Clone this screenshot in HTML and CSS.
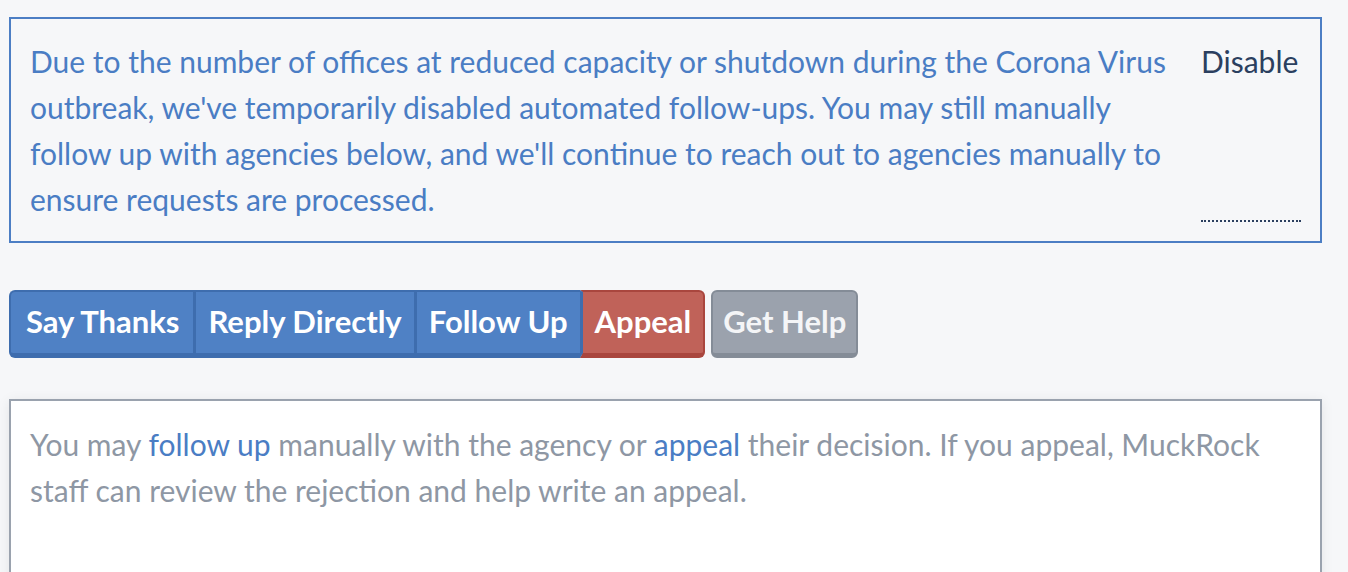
FILE: index.html
```html
<!DOCTYPE html>
<html lang="en">
<head>
    <meta charset="UTF-8">
    <meta name="viewport" content="width=device-width, initial-scale=1.0">
    <title>Request actions</title>
    <link rel="stylesheet" href="styles.css">
</head>
<body>
    <div class="notice">
        <p class="notice-text">Due to the number of offices at reduced capacity or shutdown during the Corona Virus outbreak, we've temporarily disabled automated follow-ups. You may still manually follow up with agencies below, and we'll continue to reach out to agencies manually to ensure requests are processed.</p>
        <button class="notice-toggle" type="button">Disable</button>
    </div>

    <div class="actions">
        <div class="btn-group">
            <button class="btn btn-blue" type="button">Say Thanks</button>
            <button class="btn btn-blue" type="button">Reply Directly</button>
            <button class="btn btn-blue" type="button">Follow Up</button>
            <button class="btn btn-red" type="button">Appeal</button>
        </div>
        <button class="btn btn-gray" type="button">Get Help</button>
    </div>

    <div class="panel">
        <p>You may <a href="#">follow up</a> manually with the agency or <a href="#">appeal</a> their decision. If you appeal, MuckRock staff can review the rejection and help write an appeal.</p>
    </div>
</body>
</html>
```

FILE: styles.css
```css
body {
    margin: 0;
    padding: 17px 26px 0 9px;
    background: #f6f7f9;
    font-family: 'Lato', 'Open Sans', sans-serif;
    overflow: hidden;
}
.notice {
    display: flex;
    gap: 20px;
    border: 2px solid #4c7ec4;
    padding: 19px 19px;
}
.notice-text {
    flex: 1;
    margin: 0;
    color: #4a7dc4;
    font-size: 30px;
    line-height: 46px;
}
.notice-toggle {
    align-self: stretch;
    width: 100px;
    padding: 0;
    background: none;
    border: none;
    border-bottom: 2px dotted #2b3f5f;
    color: #2b3f5f;
    font-family: inherit;
    font-size: 30px;
    line-height: 46px;
    text-align: left;
    display: flex;
    align-items: flex-start;
}
.actions {
    display: flex;
    gap: 6px;
    margin-top: 47px;
}
.btn-group {
    display: flex;
}
.btn {
    height: 68px;
    padding: 0 12px 3px;
    border: 2px solid;
    border-bottom-width: 5px;
    border-radius: 6px;
    color: #fff;
    font-family: inherit;
    font-size: 31px;
    font-weight: bold;
    cursor: pointer;
}
.btn-group .btn {
    border-radius: 0;
    border-left-width: 0;
    border-right-width: 0;
}
.btn-group .btn + .btn {
    border-left: 3px solid #3e6dae;
}
.btn-group .btn:first-child {
    border-radius: 6px 0 0 6px;
    border-left-width: 2px;
    padding: 0 14px 3px 15px;
}
.btn-group .btn:last-child {
    border-radius: 0 6px 6px 0;
    border-right-width: 2px;
}
.btn-blue {
    background: #4f81c5;
    border-color: #3e6dae;
}
.btn-red {
    background: #c06259;
    border-color: #a9463e;
}
.btn-group .btn-red {
    border-left-color: #a9463e;
}
.btn-gray {
    padding: 0 10px 3px;
    background: #9ba2ad;
    border-color: #848c97;
    color: #f4f5f7;
}
.panel {
    margin-top: 41px;
    height: 200px;
    background: #fff;
    border: 2px solid #9aa2ae;
    box-shadow: 0 2px 12px rgba(0, 0, 0, 0.08);
    padding: 20px 19px;
}
.panel p {
    margin: 0;
    color: #8e97a4;
    font-size: 30px;
    line-height: 46px;
}
.panel a {
    color: #4a7dc4;
    text-decoration: none;
}
```
